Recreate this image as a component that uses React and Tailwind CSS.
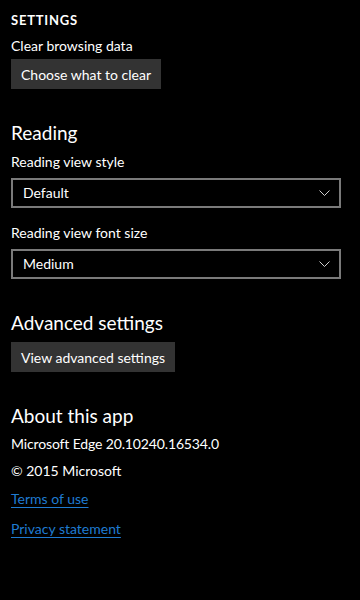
import React from "react";

function Chevron() {
  return (
    <svg width="11" height="6" viewBox="0 0 11 6" fill="none">
      <path d="M0.5 0.5 L5.5 5.5 L10.5 0.5" stroke="#d0d0d0" strokeWidth="1" />
    </svg>
  );
}

function Select({ value, className }) {
  return (
    <div className={`mr-[19px] h-[30px] border-2 border-[#7a7a7a] flex items-center justify-between pl-[10px] pr-[9px] ${className}`}>
      <span className="text-[14px] leading-[20px] text-white">{value}</span>
      <Chevron />
    </div>
  );
}

export default function App() {
  return (
    <div className="w-[360px] h-[600px] bg-black text-white pl-[11px] pt-[10px] font-['Lato',sans-serif]">
      <div className="h-[20px] leading-[20px] text-[13px] font-bold tracking-[0.06em]">SETTINGS</div>
      <div className="mt-[6px] h-[20px] leading-[20px] text-[14px]">Clear browsing data</div>
      <div className="mt-[3px] h-[30px] w-[150px] bg-[#333333] flex items-center pl-[10px] text-[14px] whitespace-nowrap">
        Choose what to clear
      </div>

      <div className="mt-[31px] h-[26px] leading-[26px] text-[19px]">Reading</div>
      <div className="mt-[6px] h-[20px] leading-[20px] text-[14px]">Reading view style</div>
      <Select value="Default" className="mt-[6px]" />
      <div className="mt-[15px] h-[20px] leading-[20px] text-[14px]">Reading view font size</div>
      <Select value="Medium" className="mt-[6px]" />

      <div className="mt-[31px] h-[26px] leading-[26px] text-[19px]">Advanced settings</div>
      <div className="mt-[6px] h-[30px] w-[164px] bg-[#333333] flex items-center pl-[10px] text-[14px] whitespace-nowrap">
        View advanced settings
      </div>

      <div className="mt-[31px] h-[26px] leading-[26px] text-[19px]">About this app</div>
      <div className="mt-[5px] h-[20px] leading-[20px] text-[14px] tracking-[-0.01em]">Microsoft Edge 20.10240.16534.0</div>
      <div className="mt-[7px] h-[20px] leading-[20px] text-[14px]">© 2015 Microsoft</div>
      <div className="mt-[8px] h-[20px] leading-[20px] text-[14px] text-[#1f7bd1] underline underline-offset-[3px]">Terms of use</div>
      <div className="mt-[10px] h-[20px] leading-[20px] text-[14px] text-[#1f7bd1] underline underline-offset-[3px]">Privacy statement</div>
    </div>
  );
}
